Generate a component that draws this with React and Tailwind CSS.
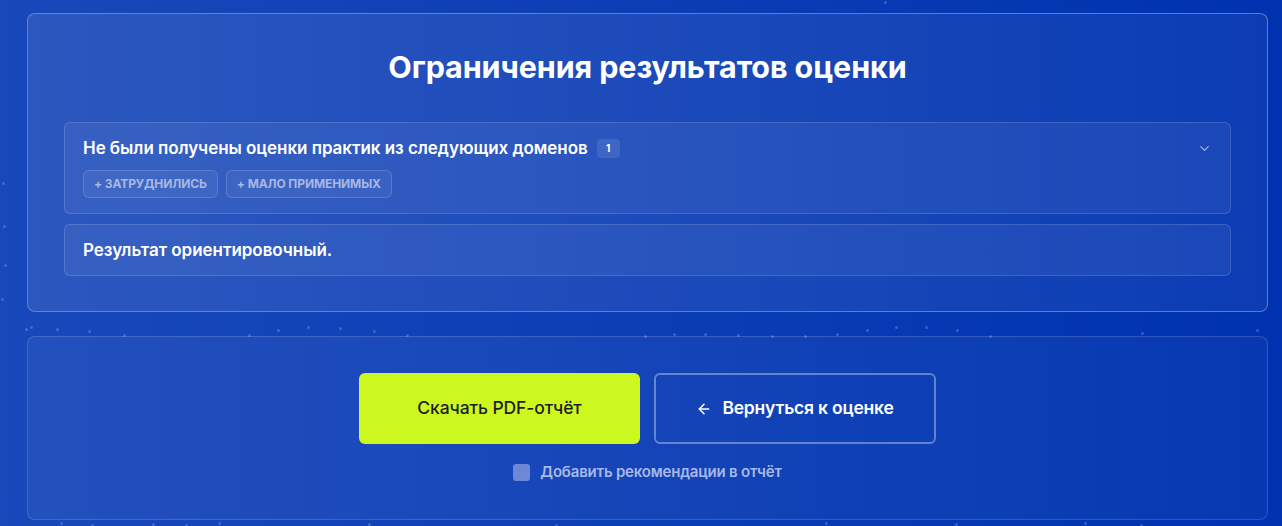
import React, { useState } from 'react';
import { ChevronDown, ArrowLeft } from 'lucide-react';

// faint particles scattered over the background
const dots = [
  [884, 1], [2, 182], [3, 225], [4, 264], [1, 298], [30, 326],
  [25, 328], [56, 328], [88, 330], [123, 334], [248, 334], [277, 329],
  [307, 326], [339, 327], [373, 330], [406, 334], [644, 335], [673, 333],
  [704, 333], [737, 334], [771, 335], [804, 335], [836, 333], [866, 329],
  [895, 326], [925, 326], [956, 329], [989, 335], [1141, 332], [1256, 329],
  [60, 522], [91, 524], [152, 523], [185, 524], [218, 522], [368, 523],
  [555, 524], [825, 522], [955, 523], [1084, 522], [1140, 524],
];

const domains = ['+ Затруднились', '+ Мало применимых'];

const App = () => {
  const [withRecs, setWithRecs] = useState(false);

  return (
    <div className="relative min-h-screen w-full overflow-hidden bg-gradient-to-r from-[#1848ba] to-[#0032b0] pl-[27px] pr-[14px] pt-[13px] pb-[6px] font-['Inter',sans-serif] text-white">
      {dots.map(([x, y], i) => (
        <span
          key={i}
          className="absolute h-[3px] w-[3px] rounded-full bg-white/20"
          style={{ left: x, top: y }}
        />
      ))}

      {/* Limitations block */}
      <section className="relative rounded-lg border border-[#8d93b8]/70 bg-gradient-to-r from-white/[0.09] to-white/[0.05] px-[36px] pt-[36px] pb-[35px]">
        <h1 className="text-center text-[30.5px] font-bold leading-[34px] tracking-[-0.1px]">
          Ограничения результатов оценки
        </h1>

        <div className="mt-[38px] flex flex-col gap-[10px]">
          <div className="rounded-md border border-white/15 bg-white/[0.06] px-[18px] pt-[13px] pb-[15px]">
            <div className="flex items-center justify-between">
              <div className="flex items-center gap-[9px]">
                <span className="text-[17px] font-semibold leading-6 tracking-[-0.05px]">
                  Не были получены оценки практик из следующих доменов
                </span>
                <span className="flex h-[19px] w-[23px] items-center justify-center rounded bg-white/10 text-[10px] font-bold">
                  1
                </span>
              </div>
              <ChevronDown size={15} strokeWidth={2} className="text-[#a4b4e4]" />
            </div>
            <div className="mt-[10px] flex gap-2">
              {domains.map(d => (
                <span
                  key={d}
                  className="flex h-[28px] items-center rounded-md border border-white/15 bg-white/[0.05] px-[10px] text-[12px] font-bold uppercase tracking-[-0.1px] text-[#a9b7e2]"
                >
                  {d}
                </span>
              ))}
            </div>
          </div>

          <div className="rounded-md border border-white/15 bg-white/[0.06] px-[18px] pt-[13px] pb-[13px]">
            <span className="text-[17px] font-semibold leading-6 tracking-[-0.05px]">
              Результат ориентировочный.
            </span>
          </div>
        </div>
      </section>

      {/* Export actions */}
      <section className="relative mt-[24px] rounded-lg border border-white/15 bg-gradient-to-r from-white/[0.05] to-white/[0.03] pt-[36px] pb-[35px]">
        <div className="flex justify-center gap-[14px]">
          <button className="h-[71px] w-[281px] rounded-md bg-[#cdf81f] text-[17.5px] font-medium tracking-[-0.1px] text-[#1c1f2a]">
            Скачать PDF-отчёт
          </button>
          <button className="flex h-[71px] w-[282px] items-center justify-center gap-[10px] rounded-md border-2 border-white/35 text-[17.5px] font-semibold tracking-[-0.2px]">
            <ArrowLeft size={16} strokeWidth={2.2} />
            Вернуться к оценке
          </button>
        </div>
        <label className="mt-[17px] flex cursor-pointer items-center justify-center gap-[10px]">
          <input
            type="checkbox"
            checked={withRecs}
            onChange={e => setWithRecs(e.target.checked)}
            className="h-[17px] w-[17px] appearance-none rounded-[3px] bg-[#6f88d6]"
          />
          <span className="text-[15px] font-semibold tracking-[-0.2px] text-[#a9b8e6]">
            Добавить рекомендации в отчёт
          </span>
        </label>
      </section>
    </div>
  );
};

export default App;
